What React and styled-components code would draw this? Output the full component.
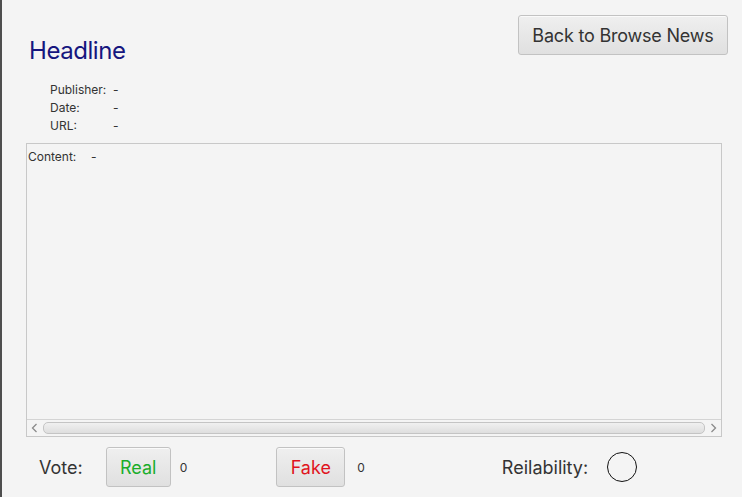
import React from "react";
import styled, { createGlobalStyle } from "styled-components";

const Global = createGlobalStyle`
  html, body { margin: 0; padding: 0; background: #f4f4f4; }
  body { font-family: Inter, "Open Sans", "Liberation Sans", sans-serif; color: #333; }
  #root { width: 742px; height: 497px; }
`;

const Window = styled.div`
  width: 742px;
  height: 497px;
  box-sizing: border-box;
  border-left: 2px solid #4e4e4e;
  background: #f4f4f4;
  display: flex;
  flex-direction: column;
  overflow: hidden;
`;

const Header = styled.div`
  display: flex;
  justify-content: space-between;
  align-items: flex-start;
  padding: 15px 14px 0 27px;
`;

const HeaderLeft = styled.div`
  display: flex;
  flex-direction: column;
`;

const Headline = styled.h1`
  margin: 21px 0 0 0;
  font-size: 24px;
  font-weight: 400;
  line-height: 29px;
  color: #16167f;
  letter-spacing: -0.45px;
`;

const Meta = styled.div`
  display: grid;
  grid-template-columns: 63px auto;
  margin: 16px 0 0 21px;
  font-size: 12px;
  line-height: 18px;
  color: #333;
`;

const GrayButton = styled.button`
  font-family: inherit;
  font-size: ${(p) => p.$size || 18}px;
  color: ${(p) => p.$color || "#333"};
  height: ${(p) => p.$h || 40}px;
  width: ${(p) => p.$w}px;
  padding: 0;
  border: 1px solid #c2c2c2;
  border-radius: 3px;
  background: linear-gradient(#efefef, #e0e0e0);
  box-shadow: inset 0 1px 0 #fafafa;
  cursor: default;
  letter-spacing: ${(p) => p.$ls || 0}px;
`;

const ContentBox = styled.div`
  margin: 8px 0 0 24px;
  width: 696px;
  height: 294px;
  box-sizing: border-box;
  border: 1px solid #c8c8c8;
  background: #f4f4f4;
  display: flex;
  flex-direction: column;
`;

const ContentText = styled.div`
  flex: 1;
  display: grid;
  grid-template-columns: 63px auto;
  align-content: start;
  padding: 5px 0 0 1px;
  font-size: 12px;
  line-height: 15px;
  color: #333;
`;

const ScrollBar = styled.div`
  height: 16px;
  border-top: 1px solid #d4d4d4;
  background: #f4f4f4;
  display: flex;
  align-items: center;
`;

const Arrow = styled.div`
  width: 15px;
  display: flex;
  justify-content: center;
  align-items: center;
`;

const Thumb = styled.div`
  flex: 1;
  height: 10px;
  margin: 0 1px;
  border: 1px solid #c4c4c4;
  border-radius: 5px;
  background: linear-gradient(#f0f0f0, #dedede);
`;

const VoteRow = styled.div`
  display: flex;
  align-items: center;
  margin-top: 10px;
  height: 40px;
`;

const Label = styled.span`
  font-size: 18px;
  color: #333;
  margin-left: ${(p) => p.$ml}px;
`;

const Count = styled.span`
  font-size: 12px;
  color: #333;
  margin-left: ${(p) => p.$ml}px;
`;

const Spacer = styled.div`
  width: ${(p) => p.$w}px;
  flex: none;
`;

const Circle = styled.div`
  width: 28px;
  height: 28px;
  border: 1px solid #111;
  border-radius: 50%;
  margin-left: ${(p) => p.$ml}px;
`;

const ArrowIcon = ({ dir }) => (
  <svg width="7" height="10" viewBox="0 0 7 10">
    <path
      d={dir === "left" ? "M5.5 1 L1.5 5 L5.5 9" : "M1.5 1 L5.5 5 L1.5 9"}
      fill="none"
      stroke="#8a8a8a"
      strokeWidth="1.3"
    />
  </svg>
);

export default function App() {
  return (
    <>
      <Global />
      <Window>
        <Header>
          <HeaderLeft>
            <Headline>Headline</Headline>
            <Meta>
              <span>Publisher:</span>
              <span>-</span>
              <span>Date:</span>
              <span>-</span>
              <span>URL:</span>
              <span>-</span>
            </Meta>
          </HeaderLeft>
          <GrayButton $w={210} $h={40} $size={18} $ls={-0.2}>
            Back to Browse News
          </GrayButton>
        </Header>
        <ContentBox>
          <ContentText>
            <span>Content:</span>
            <span>-</span>
          </ContentText>
          <ScrollBar>
            <Arrow>
              <ArrowIcon dir="left" />
            </Arrow>
            <Thumb />
            <Arrow>
              <ArrowIcon dir="right" />
            </Arrow>
          </ScrollBar>
        </ContentBox>
        <VoteRow>
          <Label $ml={37}>Vote:</Label>
          <Spacer $w={23} />
          <GrayButton $w={65} $color="#1aad2b">
            Real
          </GrayButton>
          <Count $ml={9}>0</Count>
          <Spacer $w={89} />
          <GrayButton $w={69} $color="#e0141e">
            Fake
          </GrayButton>
          <Count $ml={12}>0</Count>
          <Label $ml={137}>Reilability:</Label>
          <Circle $ml={19} />
        </VoteRow>
      </Window>
    </>
  );
}
